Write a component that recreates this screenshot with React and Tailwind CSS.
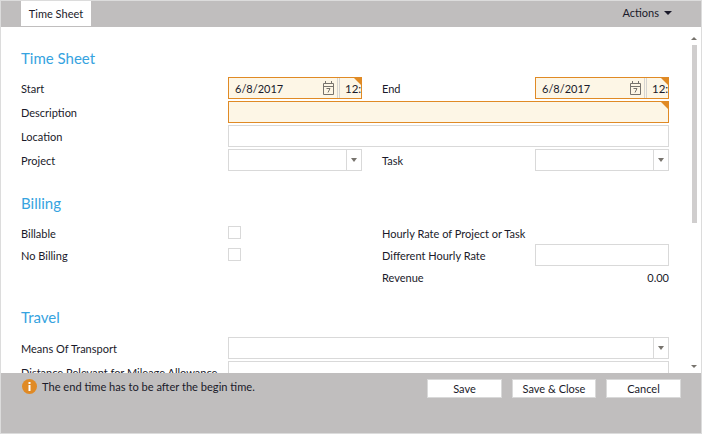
import React from 'react';

const labelCls = 'h-[22px] text-[11px] leading-[24px] text-[#1a1a2a] whitespace-nowrap';

const Corner = () => (
  <span className="absolute top-0 right-0 w-0 h-0 border-t-[7px] border-l-[7px] border-t-[#e08a25] border-l-transparent" />
);

const CalendarIcon = () => (
  <svg width="11" height="14" viewBox="0 0 11 14" className="shrink-0" fill="none" stroke="#77736d">
    <path d="M0.5 2.5H10.5V13.5H0.5Z" />
    <path d="M0.5 5.5H10.5" />
    <path d="M2.5 0V3M8.5 0V3" />
    <path d="M3.5 7.5H7L5 11.5" />
  </svg>
);

const Arrow = () => (
  <span className="w-0 h-0 border-x-[3px] border-x-transparent border-t-[4px] border-t-[#77736d]" />
);

const DateField = () => (
  <div className="relative h-[22px] flex items-center border border-[#e08a25] bg-[#fdf6e6] overflow-hidden">
    <span className="flex-1 pl-[6px] text-[11px] leading-[22px] pt-px text-[#1a1a2a]">6/8/2017</span>
    <CalendarIcon />
    <span className="ml-[3px] w-[3px] h-full border-x border-[#d6d4d0]" />
    <span className="w-[21px] pl-[5px] text-[11.5px] leading-[22px] pt-px text-[#1a1a2a] overflow-hidden whitespace-nowrap">12:</span>
    <Corner />
  </div>
);

const TextBox = ({ className = '' }) => (
  <div className={`h-[22px] border border-[#d9d9d9] bg-white ${className}`} />
);

const Combo = ({ className = '' }) => (
  <div className={`h-[22px] flex justify-end border border-[#d9d9d9] bg-white ${className}`}>
    <span className="w-[15px] border-l border-[#d9d9d9] flex items-center justify-center">
      <Arrow />
    </span>
  </div>
);

const Heading = ({ children, className = '' }) => (
  <h2 className={`text-[15px] leading-[22px] text-[#36a3e0] ${className}`}>{children}</h2>
);

const Checkbox = () => <div className="w-[13px] h-[13px] border border-[#d9d9d9] bg-white" />;

const Button = ({ children, className = '' }) => (
  <button className={`h-[19px] border border-[#d9d9d9] bg-white text-[11px] leading-none text-[#1a1a2a] ${className}`}>
    {children}
  </button>
);

export default function App() {
  return (
    <div className="w-[702px] h-[434px] flex flex-col border border-[#dcdcdc] bg-white font-['Lato','Open_Sans',sans-serif] overflow-hidden">
      <div className="h-[26px] shrink-0 flex justify-between bg-[#c0bebe] pl-[20px] pr-[29px]">
        <div className="w-[70px] h-[25px] pt-[2px] flex items-center justify-center bg-white text-[11px] text-[#1a1a2a]">
          Time Sheet
        </div>
        <div className="flex items-center gap-[5px] h-[24px] text-[11px] text-[#1a1a2a]">
          Actions
          <span className="w-0 h-0 border-x-[4px] border-x-transparent border-t-[4px] border-t-[#1a1a2a]" />
        </div>
      </div>

      <div className="flex-1 min-h-0 relative overflow-hidden pl-[20px]">
        <div className="w-[648px]">
          <Heading className="mt-[20px]">Time Sheet</Heading>
          <div className="mt-[8px] grid grid-cols-[207px_134px_20px_153px_134px] gap-y-[2px]">
            <div className={labelCls}>Start</div>
            <DateField />
            <div />
            <div className={labelCls}>End</div>
            <DateField />

            <div className={labelCls}>Description</div>
            <div className="col-span-4 relative h-[22px] border border-[#e08a25] bg-[#fdf6e6]">
              <Corner />
            </div>

            <div className={labelCls}>Location</div>
            <TextBox className="col-span-4" />

            <div className={labelCls}>Project</div>
            <Combo />
            <div />
            <div className={labelCls}>Task</div>
            <Combo />
          </div>

          <Heading className="mt-[21px]">Billing</Heading>
          <div className="mt-[8px] grid grid-cols-[207px_134px_20px_153px_134px]">
            <div className={labelCls}>Billable</div>
            <div className="h-[22px] pt-[4px]"><Checkbox /></div>
            <div />
            <div className={`${labelCls} col-span-2`}>Hourly Rate of Project or Task</div>

            <div className={labelCls}>No Billing</div>
            <div className="h-[22px] pt-[4px]"><Checkbox /></div>
            <div />
            <div className={labelCls}>Different Hourly Rate</div>
            <TextBox />

            <div className="col-span-3" />
            <div className={labelCls}>Revenue</div>
            <div className={`${labelCls} text-right`}>0.00</div>
          </div>

          <Heading className="mt-[18px]">Travel</Heading>
          <div className="mt-[9px] grid grid-cols-[207px_441px] gap-y-[2px]">
            <div className={labelCls}>Means Of Transport</div>
            <Combo />
            <div className={labelCls}>Distance Relevant for Mileage Allowance</div>
            <TextBox />
          </div>
        </div>

        {/* scrollbar */}
        <div className="absolute top-0 bottom-0 right-[1px] w-[12px] flex flex-col items-center">
          <span className="mt-[10px] w-0 h-0 border-x-[3px] border-x-transparent border-b-[3px] border-b-[#77736d]" />
          <span className="mt-[5px] w-[5px] h-[178px] bg-[#d0cece]" />
          <span className="mt-auto mb-[5px] w-0 h-0 border-x-[3px] border-x-transparent border-t-[3px] border-t-[#77736d]" />
        </div>
      </div>

      <div className="h-[60px] shrink-0 flex justify-between bg-[#c0bebe] pl-[21px] pr-[20px] pt-[6px]">
        <div className="flex items-center h-[15px] gap-[5px] text-[11.1px] text-[#1a1a2a]">
          <svg width="15" height="15" viewBox="0 0 15 15" className="shrink-0">
            <circle cx="7.5" cy="7.5" r="7.5" fill="#e08a25" />
            <rect x="6.5" y="3" width="2" height="2" fill="#fff" />
            <rect x="6.5" y="6" width="2" height="6" fill="#fff" />
          </svg>
          <span className="pt-[2px]">The end time has to be after the begin time.</span>
        </div>
        <div className="flex gap-[10px]">
          <Button className="w-[75px]">Save</Button>
          <Button className="w-[84px]">Save &amp; Close</Button>
          <Button className="w-[75px]">Cancel</Button>
        </div>
      </div>
    </div>
  );
}
